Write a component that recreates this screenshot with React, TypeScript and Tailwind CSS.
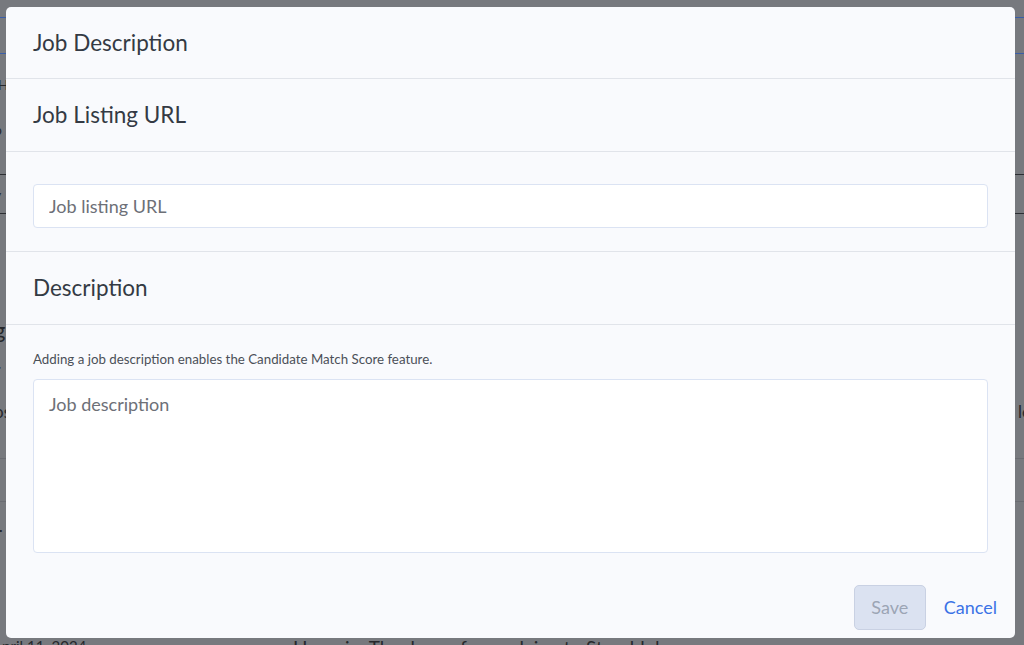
import React from "react";

function Row({ h, left, right, border }: { h: string; left?: string; right?: string; border?: string }) {
  return (
    <div className={`flex items-center justify-between whitespace-nowrap ${h} ${border ?? ""}`}>
      <span className="ml-[-6px]">{left}</span>
      <span className="mr-[-7px]">{right}</span>
    </div>
  );
}

export default function App() {
  return (
    <div
      className="relative h-[645px] w-[1024px] overflow-hidden bg-[#77797e]"
      style={{ fontFamily: "Lato, 'Noto Sans', sans-serif" }}
    >
      {/* dimmed page behind the modal */}
      <div className="flex h-full flex-col text-[#26282c]">
        <div className="h-[17px]" />
        <div className="h-[37px] border-y border-[#3b5ea8]" />
        <Row h="h-[60px] text-[14px]" left="(HI" />
        <Row h="h-[30px] text-[14px]" left="p" />
        <div className="h-[30px]" />
        <Row h="h-[40px] text-[14px]" left="y" border="border-y border-[#2c2e33]" />
        <div className="h-[95px]" />
        <Row h="h-[40px] text-[22px]" left="g" />
        <Row h="h-[40px] text-[18px]" left="r" />
        <Row h="h-[45px] text-[17px]" left="os" right="le" />
        <div className="h-[25px] border-b border-[#6a6c72]" />
        <div className="h-[43px] border-b border-[#6a6c72]" />
        <Row h="h-[60px] text-[22px]" left="r" />
        <div className="flex flex-1 items-end whitespace-nowrap">
          <span className="ml-[-8px] w-[301px] text-[15px] leading-[18px] mb-[-10px]">April 11, 2024</span>
          <span className="text-[19px] leading-[22px] mb-[-14px]">Hasnain, Thank you for applying to Storable!</span>
        </div>
      </div>

      {/* overlay + modal */}
      <div className="absolute inset-0 flex pb-[7px] pl-[6px] pr-[9px] pt-[7px]">
        <div className="flex flex-1 flex-col rounded-[5px] bg-[#f9fafd]">
          <div className="flex h-[72px] items-center border-b border-[#e1e4ea] px-[27px]">
            <h2 className="text-[22.5px] text-[#343a44]">Job Description</h2>
          </div>
          <div className="flex h-[73px] items-center border-b border-[#e1e4ea] px-[27px]">
            <h3 className="text-[22.5px] text-[#343a44]">Job Listing URL</h3>
          </div>
          <div className="border-b border-[#e1e4ea] px-[27px] pb-[23px] pt-[32px]">
            <input
              className="h-[44px] w-full rounded-[4px] border border-[#dbe3f3] bg-white px-[15px] text-[18px] text-[#343a44] outline-none placeholder:text-[#6d7077]"
              placeholder="Job listing URL"
            />
          </div>
          <div className="flex h-[73px] items-center border-b border-[#e1e4ea] px-[27px]">
            <h3 className="text-[22.5px] text-[#343a44]">Description</h3>
          </div>
          <div className="flex flex-1 flex-col px-[27px] pt-[25px]">
            <p className="text-[13.3px] text-[#4b5058]">
              Adding a job description enables the Candidate Match Score feature.
            </p>
            <textarea
              className="mt-[9px] h-[174px] w-full resize-none rounded-[4px] border border-[#dbe3f3] bg-white px-[15px] py-[11px] text-[18px] text-[#343a44] outline-none placeholder:text-[#6d7077]"
              placeholder="Job description"
            />
            <div className="mt-[32px] flex items-center justify-end gap-[18px]">
              <button
                disabled
                className="h-[45px] w-[72px] rounded-[5px] border border-[#c9d1e3] bg-[#dbe2f1] text-[18px] text-[#9ca5b5]"
              >
                Save
              </button>
              <button className="mr-[-9px] text-[18px] text-[#3b72e6]">Cancel</button>
            </div>
          </div>
        </div>
      </div>
    </div>
  );
}
